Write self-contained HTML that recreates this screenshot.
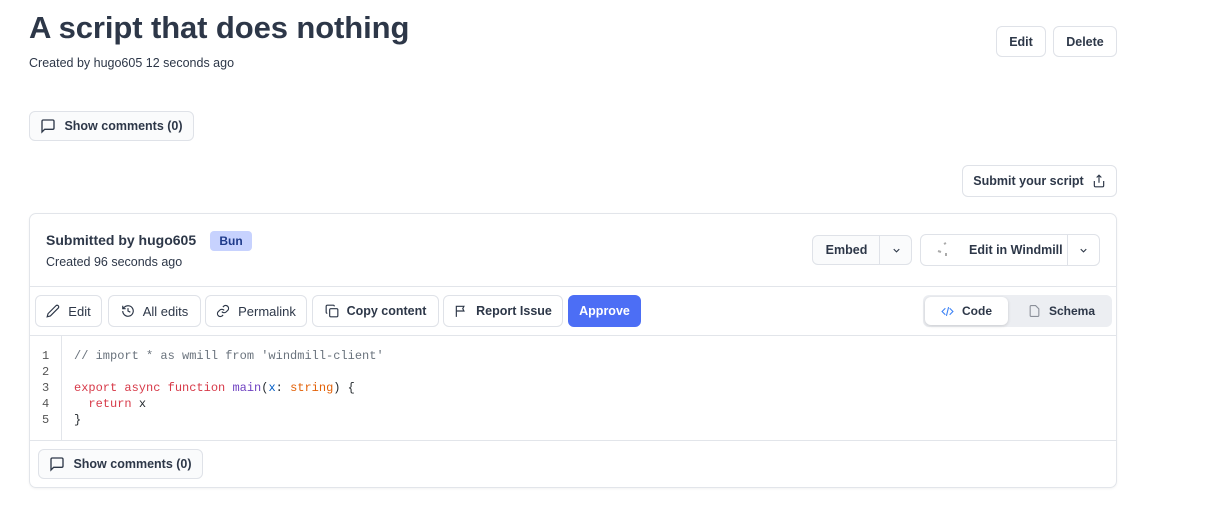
<!DOCTYPE html>
<html><head><meta charset="utf-8"><style>
*{box-sizing:border-box;margin:0;padding:0}
body{width:1214px;height:526px;background:#fff;font-family:"Liberation Sans",sans-serif;color:#2d3748;position:relative;overflow:hidden}
.a{position:absolute}
.btn{position:absolute;border:1px solid #dfe2e8;border-radius:6px;background:#fff;display:flex;align-items:center;justify-content:center;font-size:13px;color:#2d3748;gap:8px}
.b{font-weight:bold;font-size:12.5px}
svg{flex:none}
.code{font-family:"Liberation Mono",monospace;font-size:12px;line-height:16px;white-space:pre}
</style></head><body>
<div class="a" style="left:29px;top:10px;font-size:31px;font-weight:bold;color:#2d3748;letter-spacing:-0.1px">A script that does nothing</div>
<div class="a" style="left:29px;top:56px;font-size:12.5px">Created by hugo605 12 seconds ago</div>
<div class="btn b" style="left:996px;top:26px;width:50px;height:31px">Edit</div>
<div class="btn b" style="left:1053px;top:26px;width:64px;height:31px">Delete</div>
<div class="btn b" style="left:29px;top:111px;width:165px;height:30px;background:#fafbfc"><svg width="16" height="16" viewBox="0 0 24 24" fill="none" stroke="#2d3748" stroke-width="2"><path d="M21 15a2 2 0 0 1-2 2H7l-4 4V5a2 2 0 0 1 2-2h14a2 2 0 0 1 2 2z"/></svg>Show comments (0)</div>
<div class="btn b" style="left:962px;top:165px;width:155px;height:32px">Submit your script <svg width="14" height="14" viewBox="0 0 24 24" fill="none" stroke="#2d3748" stroke-width="2"><path d="M4 12v8a2 2 0 0 0 2 2h12a2 2 0 0 0 2-2v-8M16 6l-4-4-4 4M12 2v13"/></svg></div>

<div class="a" style="left:29px;top:213px;width:1088px;height:275px;border:1px solid #e2e5ea;border-radius:7px;box-shadow:0 1px 2px rgba(0,0,0,.05)"></div>
<div class="a" style="left:46px;top:232px;font-size:14px;font-weight:bold">Submitted by hugo605</div>
<div class="a b" style="left:210px;top:231px;width:42px;height:20px;background:#c7d2fe;color:#1e3a8a;border-radius:4px;font-size:12px;display:flex;align-items:center;justify-content:center">Bun</div>
<div class="a" style="left:46px;top:255px;font-size:12.5px">Created 96 seconds ago</div>
<div class="btn b" style="left:812px;top:235px;width:100px;height:30px;background:#fafbfc;justify-content:flex-start"><span style="width:67px;text-align:center">Embed</span><span style="position:absolute;left:66px;top:0;bottom:0;border-left:1px solid #dfe2e8"></span><svg style="position:absolute;left:78px" width="11" height="11" viewBox="0 0 24 24" fill="none" stroke="#2d3748" stroke-width="2.5"><path d="M6 9l6 6 6-6"/></svg></div>
<div class="btn b" style="left:920px;top:234px;width:180px;height:32px;justify-content:flex-start"><svg style="margin-left:14px" width="18" height="16" viewBox="0 0 18 16"><path d="M9 2l2-1M3 9l3 1M11 11l0 3" stroke="#aaa" stroke-width="2"/></svg><span style="margin-left:8px">Edit in Windmill</span><span style="position:absolute;left:146px;top:0;bottom:0;border-left:1px solid #dfe2e8"></span><svg style="position:absolute;left:157px" width="11" height="11" viewBox="0 0 24 24" fill="none" stroke="#2d3748" stroke-width="2.5"><path d="M6 9l6 6 6-6"/></svg></div>
<div class="a" style="left:30px;top:286px;width:1086px;border-top:1px solid #e2e5ea"></div>

<div class="btn" style="left:35px;top:295px;width:67px;height:32px"><svg width="14" height="14" viewBox="0 0 24 24" fill="none" stroke="#2d3748" stroke-width="2"><path d="M17 3a2.8 2.8 0 1 1 4 4L7.5 20.5 2 22l1.5-5.5z"/></svg>Edit</div>
<div class="btn" style="left:108px;top:295px;width:93px;height:32px"><svg width="14" height="14" viewBox="0 0 24 24" fill="none" stroke="#2d3748" stroke-width="2"><path d="M3 12a9 9 0 1 0 3-6.7L3 8M3 3v5h5M12 7v5l4 2"/></svg>All edits</div>
<div class="btn" style="left:205px;top:295px;width:102px;height:32px"><svg width="14" height="14" viewBox="0 0 24 24" fill="none" stroke="#2d3748" stroke-width="2"><path d="M10 13a5 5 0 0 0 7.5.5l3-3a5 5 0 0 0-7-7l-1.7 1.7M14 11a5 5 0 0 0-7.5-.5l-3 3a5 5 0 0 0 7 7l1.7-1.7"/></svg>Permalink</div>
<div class="btn b" style="left:312px;top:295px;width:127px;height:32px"><svg width="14" height="14" viewBox="0 0 24 24" fill="none" stroke="#2d3748" stroke-width="2"><rect x="8" y="8" width="14" height="14" rx="2"/><path d="M4 16c-1.1 0-2-.9-2-2V4c0-1.1.9-2 2-2h10c1.1 0 2 .9 2 2"/></svg>Copy content</div>
<div class="btn b" style="left:443px;top:295px;width:120px;height:32px"><svg width="14" height="14" viewBox="0 0 24 24" fill="none" stroke="#2d3748" stroke-width="2"><path d="M4 22V4h13l-2 4 2 4H4"/></svg>Report Issue</div>
<div class="btn b" style="left:568px;top:295px;width:73px;height:32px;background:#4c6ef5;border-color:#4c6ef5;color:#fff">Approve</div>

<div class="a" style="left:923px;top:295px;width:189px;height:32px;background:#eceef2;border-radius:6px"></div>
<div class="btn b" style="left:925px;top:297px;width:83px;height:28px;border:none;box-shadow:0 1px 3px rgba(0,0,0,.15);font-size:12px"><svg width="13" height="13" viewBox="0 0 24 24" fill="none" stroke="#3b82f6" stroke-width="2"><path d="M16 18l6-6-6-6M8 6l-6 6 6 6M14 4l-4 16"/></svg>Code</div>
<div class="a b" style="left:1028px;top:304px;font-size:12px;display:flex;gap:8px;align-items:center"><svg width="13" height="14" viewBox="0 0 24 24" fill="none" stroke="#8a8f99" stroke-width="2"><path d="M14 2H6a2 2 0 0 0-2 2v16a2 2 0 0 0 2 2h12a2 2 0 0 0 2-2V8z"/></svg>Schema</div>
<div class="a" style="left:30px;top:335px;width:1086px;border-top:1px solid #e2e5ea"></div>

<div class="a code" style="left:42px;top:348px;color:#555">1
2
3
4
5</div>
<div class="a" style="left:61px;top:336px;height:104px;border-left:1px solid #e2e5ea"></div>
<div class="a code" style="left:74px;top:348px;color:#24292e"><span style="color:#6a737d">// import * as wmill from 'windmill-client'</span>

<span style="color:#d73a49">export async function</span> <span style="color:#6f42c1">main</span>(<span style="color:#005cc5">x</span>: <span style="color:#e36209">string</span>) {
  <span style="color:#d73a49">return</span> x
}</div>
<div class="a" style="left:30px;top:440px;width:1086px;border-top:1px solid #e2e5ea"></div>
<div class="btn b" style="left:38px;top:449px;width:165px;height:30px;background:#fafbfc"><svg width="16" height="16" viewBox="0 0 24 24" fill="none" stroke="#2d3748" stroke-width="2"><path d="M21 15a2 2 0 0 1-2 2H7l-4 4V5a2 2 0 0 1 2-2h14a2 2 0 0 1 2 2z"/></svg>Show comments (0)</div>
</body></html>
